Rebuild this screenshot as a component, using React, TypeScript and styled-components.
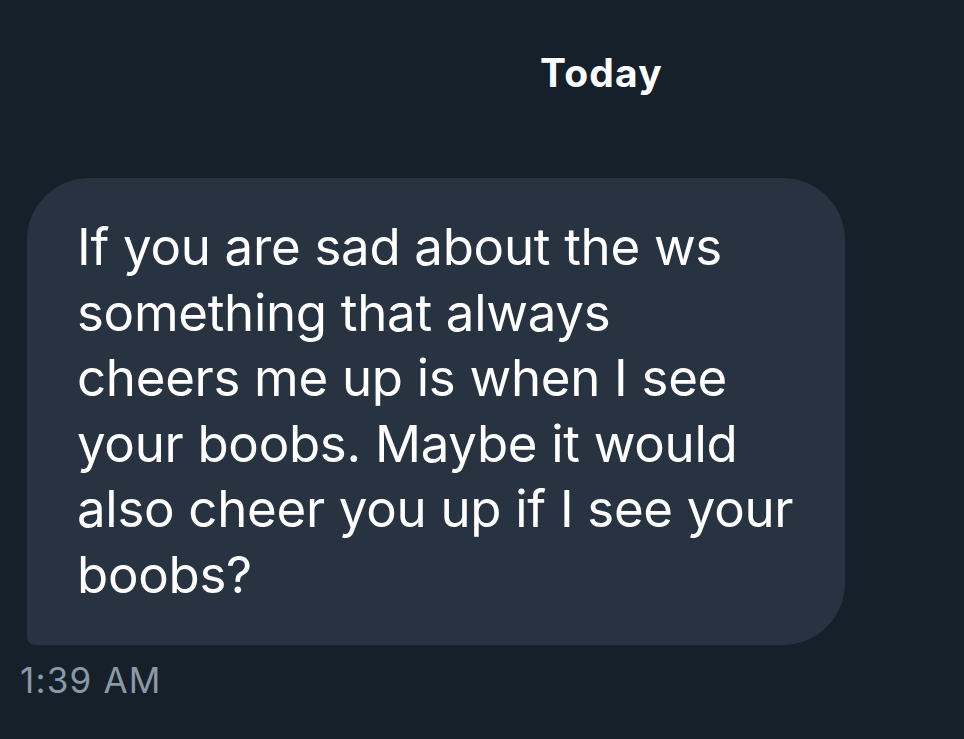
import React from 'react';
import styled, { createGlobalStyle } from 'styled-components';

const Global = createGlobalStyle`
  html, body {
    margin: 0;
    background: #15202b;
  }
  body {
    font-family: Inter, "Noto Sans", sans-serif;
  }
`;

const Screen = styled.div`
  width: 964px;
  height: 739px;
  background: #15202b;
  display: flex;
  flex-direction: column;
  overflow: hidden;
`;

const DayLabel = styled.div`
  padding: 49px 0 0 540px;
  height: 178px;
  box-sizing: border-box;
  color: #ffffff;
  font-size: 39px;
  font-weight: 700;
  letter-spacing: 1.2px;
`;

const Bubble = styled.div`
  margin-left: 27px;
  width: 818px;
  height: 467px;
  flex-shrink: 0;
  box-sizing: border-box;
  background: #273340;
  border-radius: 62px 62px 62px 8px;
  padding: 36px 30px 0 50px;
`;

const Message = styled.p`
  margin: 0;
  color: #ffffff;
  font-size: 51px;
  line-height: 65.6px;
  letter-spacing: -0.3px;
  white-space: nowrap;
`;

const Time = styled.div`
  padding: 14px 0 0 20px;
  color: #8b98a5;
  font-size: 35px;
  letter-spacing: 1.2px;
`;

export default function App() {
  return (
    <Screen>
      <Global />
      <DayLabel>Today</DayLabel>
      <Bubble>
        <Message>
          If you are sad about the ws
          <br />
          something that always
          <br />
          cheers me up is when I see
          <br />
          your boobs. Maybe it would
          <br />
          also cheer you up if I see your
          <br />
          boobs?
        </Message>
      </Bubble>
      <Time>1:39 AM</Time>
    </Screen>
  );
}
